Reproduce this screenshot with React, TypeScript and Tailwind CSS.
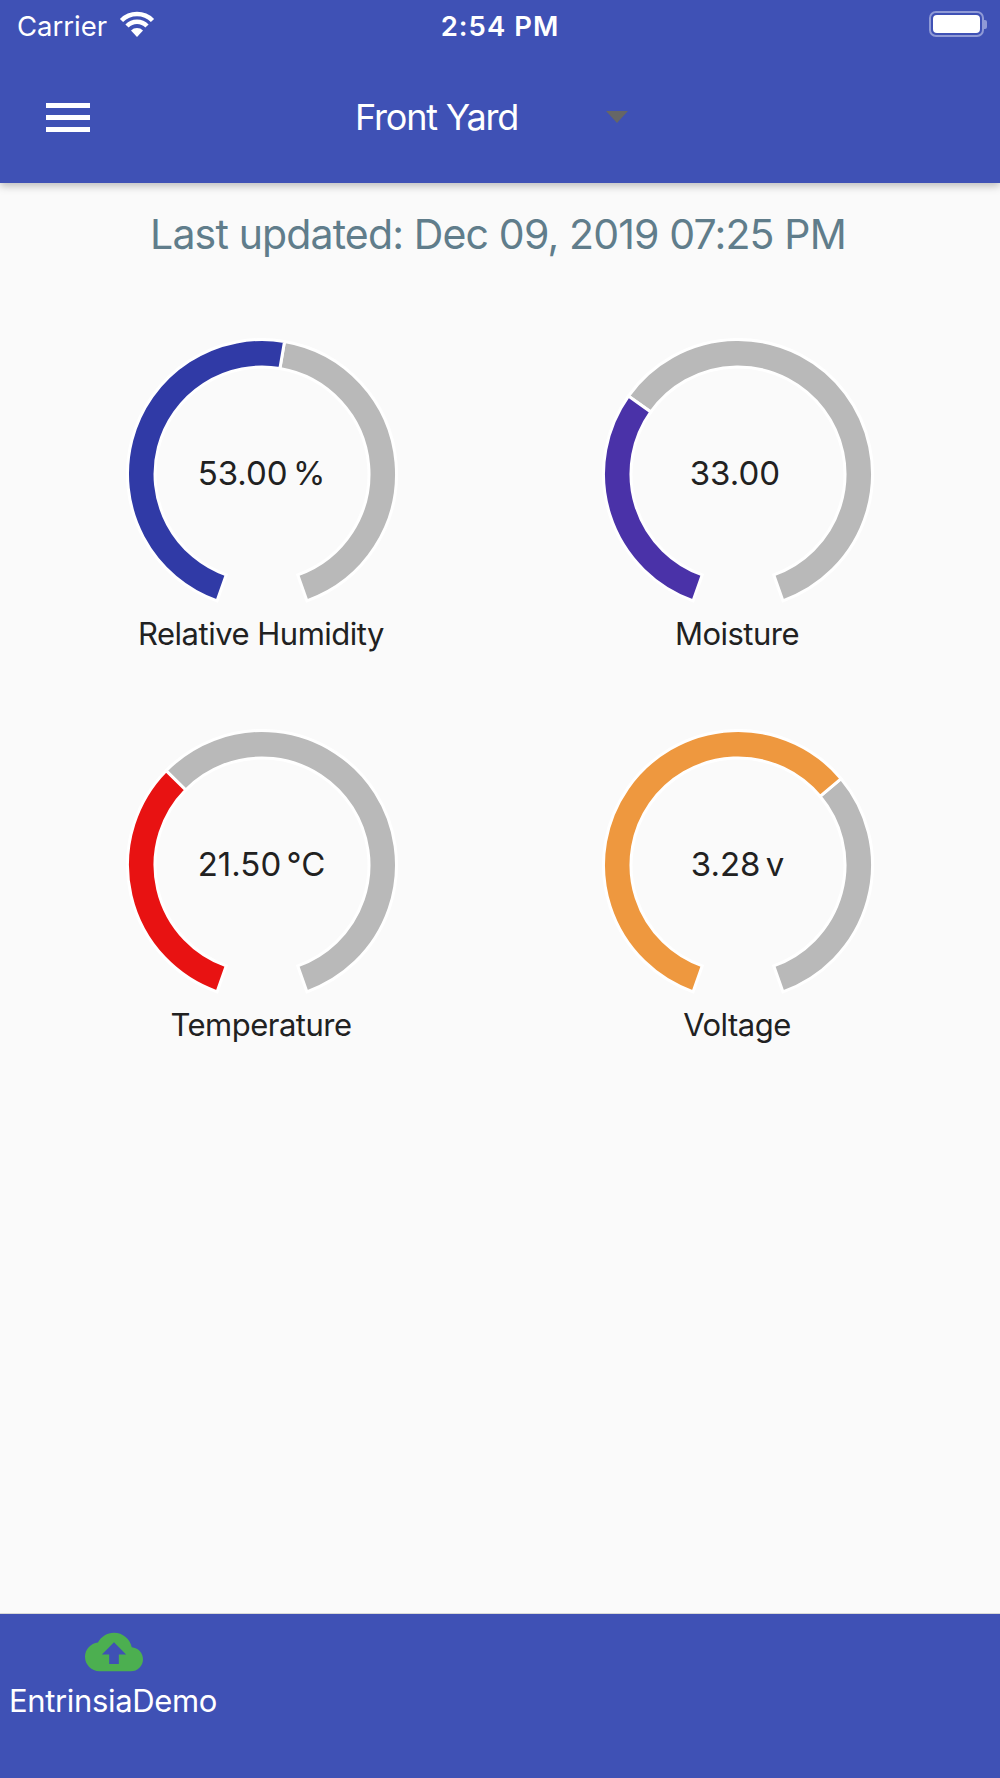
const FONT = "font-['Inter','Liberation_Sans',sans-serif]";

type Reading = {
  label: string;
  value: string;
  percent: number;
  color: string;
};

const READINGS: Reading[] = [
  { label: "Relative Humidity", value: "53.00 %", percent: 53, color: "#303aa6" },
  { label: "Moisture", value: "33.00 ", percent: 33, color: "#4a32a8" },
  { label: "Temperature", value: "21.50 °C", percent: 35.83, color: "#e81212" },
  { label: "Voltage", value: "3.28 v", percent: 65.6, color: "#ee983f" },
];

// angle is measured clockwise from the bottom of the dial
function point(r: number, angle: number) {
  const a = (angle * Math.PI) / 180;
  return `${(140 - r * Math.sin(a)).toFixed(2)} ${(140 + r * Math.cos(a)).toFixed(2)}`;
}

function sector(from: number, to: number) {
  const outer = 134.5;
  const inner = 107;
  const large = to - from > 180 ? 1 : 0;
  return [
    `M${point(outer, from)}`,
    `A${outer} ${outer} 0 ${large} 1 ${point(outer, to)}`,
    `L${point(inner, to)}`,
    `A${inner} ${inner} 0 ${large} 0 ${point(inner, from)}`,
    "Z",
  ].join(" ");
}

function Gauge({ label, value, percent, color }: Reading) {
  const start = 19.5;
  const sweep = 321;
  const mid = start + (sweep * percent) / 100;

  return (
    <div className="flex flex-col items-center">
      <div className="relative w-[280px] h-[280px]">
        <svg width="280" height="280" viewBox="0 0 280 280">
          <path d={sector(mid, start + sweep)} fill="#b9b9b9" stroke="#ffffff" strokeWidth="3" />
          <path d={sector(start, mid)} fill={color} stroke="#ffffff" strokeWidth="3" />
        </svg>
        <div className="absolute inset-0 flex items-center justify-center whitespace-pre pr-[1px] text-[33px] [word-spacing:-4px] text-[#212121]">
          {value}
        </div>
      </div>
      <div className="mt-0 pr-[2px] text-[31px] leading-[40px] tracking-[-0.5px] text-[#212121]">{label}</div>
    </div>
  );
}

function WifiIcon() {
  return (
    <svg className="mb-[7px]" width="36" height="28" viewBox="0 0 36 28" fill="none" stroke="#ffffff" strokeWidth="4.5">
      <path d="M2.5 10.5a22 22 0 0 1 31 0" />
      <path d="M8 16a14 14 0 0 1 20 0" />
      <path d="M18 27l-6-6.5a8.5 8.5 0 0 1 12 0z" fill="#ffffff" stroke="none" />
    </svg>
  );
}

export default function App() {
  return (
    <div className={`${FONT} flex flex-col w-[1000px] h-[1778px] bg-[#fafafa]`}>
      {/* Header */}
      <header className="relative z-10 h-[183px] shrink-0 bg-[#3f51b5] text-white shadow-[0_3px_8px_rgba(0,0,0,0.25)]">
        <div className="relative flex items-center justify-between h-[54px] pl-[17px] pr-[13px]">
          <div className="flex items-center gap-[12px]">
            <span className="text-[27.5px]">Carrier</span>
            <WifiIcon />
          </div>
          <span className="absolute left-0 right-0 text-center text-[27.5px] font-semibold tracking-[1px]">2:54 PM</span>
          <div className="flex items-center mb-[6px]">
            <div className="w-[55px] h-[26px] rounded-[7px] border-[2px] border-[#8f9ad6] p-[2px]">
              <div className="w-full h-full rounded-[4px] bg-white" />
            </div>
            <div className="w-[3px] h-[9px] rounded-r-[2px] bg-[#8f9ad6]" />
          </div>
        </div>
        <div className="flex items-center h-[126px] pl-[46px]">
          <div className="flex flex-col gap-[7px] w-[44px]">
            <div className="h-[5px] bg-white" />
            <div className="h-[5px] bg-white" />
            <div className="h-[5px] bg-white" />
          </div>
          <span className="ml-[265px] text-[36px] tracking-[-1.2px] leading-none">Front Yard</span>
          <div className="ml-[88px] w-0 h-0 border-x-[11px] border-x-transparent border-t-[12px] border-t-[#666666]" />
        </div>
      </header>

      {/* Content */}
      <main className="flex-1">
        <p className="mt-[28px] pr-[4px] text-center text-[41px] leading-[46px] tracking-[-0.85px] text-[#607d8b]">
          Last updated: Dec 09, 2019 07:25 PM
        </p>
        <div className="grid grid-cols-2 gap-y-[71px] px-[24px] pt-[77px]">
          {READINGS.map((r) => (
            <Gauge key={r.label} {...r} />
          ))}
        </div>
      </main>

      {/* Bottom tab */}
      <footer className="h-[165px] shrink-0 bg-[#3f51b5] border-t border-[#d8d8d8] text-white">
        <div className="flex flex-col items-center w-[226px] pt-[9px]">
          <svg className="ml-[2px]" width="58" height="58" viewBox="0 0 24 24" fill="#4caf50">
            <path d="M19.35 10.04C18.67 6.59 15.64 4 12 4 9.11 4 6.6 5.64 5.35 8.04 2.34 8.36 0 10.91 0 14c0 3.31 2.69 6 6 6h13c2.76 0 5-2.24 5-5 0-2.64-2.05-4.78-4.65-4.96zM14 13v4h-4v-4H7l5-5 5 5h-3z" />
          </svg>
          <span className="text-[31px] leading-[40px] tracking-[-0.35px]">EntrinsiaDemo</span>
        </div>
      </footer>
    </div>
  );
}
